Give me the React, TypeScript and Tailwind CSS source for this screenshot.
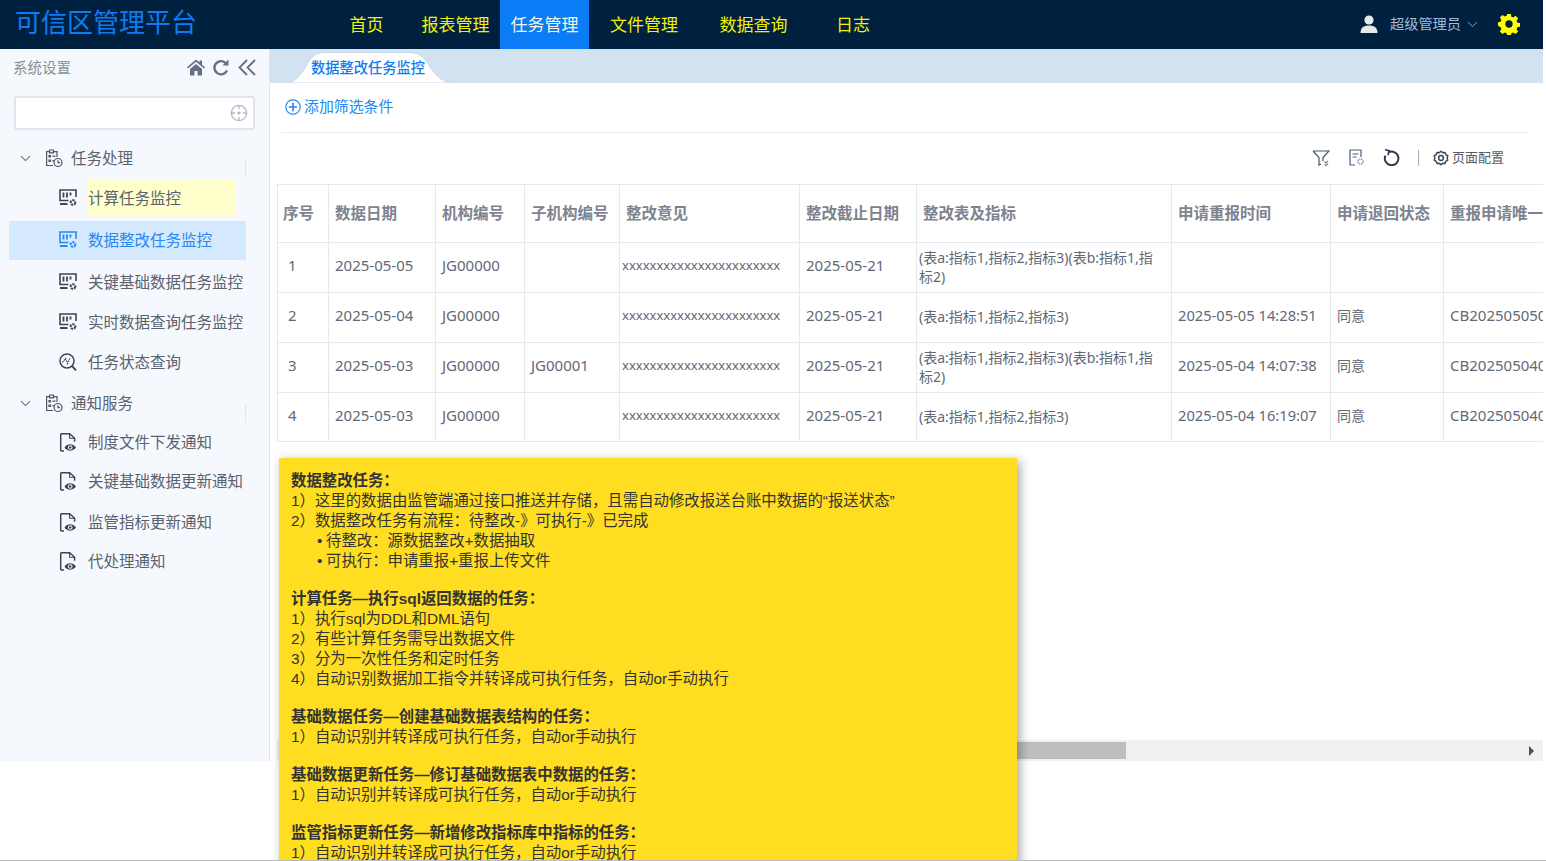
import { ChevronDown } from 'lucide-react'

const NAV = [
  { label: '首页', width: 'w-[89px]' },
  { label: '报表管理', width: 'w-[89px]' },
  { label: '任务管理', width: 'w-[89px]', active: true },
  { label: '文件管理', width: 'w-[110px]' },
  { label: '数据查询', width: 'w-[109px]' },
  { label: '日志', width: 'w-[90px]' },
]

const HEADERS = ['序号', '数据日期', '机构编号', '子机构编号', '整改意见', '整改截止日期', '整改表及指标', '申请重报时间', '申请退回状态', '重报申请唯一标识']

const XS = 'xxxxxxxxxxxxxxxxxxxxxxx'
const T2 = '(表a:指标1,指标2,指标3)(表b:指标1,指标2)'
const T1 = '(表a:指标1,指标2,指标3)'

const ROWS = [
  ['1', '2025-05-05', 'JG00000', '', XS, '2025-05-21', T2, '', '', ''],
  ['2', '2025-05-04', 'JG00000', '', XS, '2025-05-21', T1, '2025-05-05 14:28:51', '同意', 'CB20250505000001'],
  ['3', '2025-05-03', 'JG00000', 'JG00001', XS, '2025-05-21', T2, '2025-05-04 14:07:38', '同意', 'CB20250504000002'],
  ['4', '2025-05-03', 'JG00000', '', XS, '2025-05-21', T1, '2025-05-04 16:19:07', '同意', 'CB20250504000003'],
]

const NOTES = [
  {
    title: '数据整改任务：',
    lines: ['1）这里的数据由监管端通过接口推送并存储，且需自动修改报送台账中数据的“报送状态”', '2）数据整改任务有流程：待整改-》可执行-》已完成'],
    bullets: ['待整改：源数据整改+数据抽取', '可执行：申请重报+重报上传文件'],
  },
  {
    title: '计算任务—执行sql返回数据的任务：',
    lines: ['1）执行sql为DDL和DML语句', '2）有些计算任务需导出数据文件', '3）分为一次性任务和定时任务', '4）自动识别数据加工指令并转译成可执行任务，自动or手动执行'],
  },
  { title: '基础数据任务—创建基础数据表结构的任务：', lines: ['1）自动识别并转译成可执行任务，自动or手动执行'] },
  { title: '基础数据更新任务—修订基础数据表中数据的任务：', lines: ['1）自动识别并转译成可执行任务，自动or手动执行'] },
  { title: '监管指标更新任务—新增修改指标库中指标的任务：', lines: ['1）自动识别并转译成可执行任务，自动or手动执行'] },
]

function TaskIcon() {
  return (
    <svg width="18" height="19" viewBox="0 0 18 19" fill="none" stroke="currentColor" strokeWidth="1.2" className="shrink-0">
      <path d="M8 16.500H1.600V2.600h2.600M9 2.600h3v5.400" />
      <path d="M4.600 1h3.800v2.800H4.600z" />
      <path d="M4 6.500h1.500v1.500H4zM4 11h1.500v1.500H4zM7.500 7.200h3M7.500 11.700h1.500" />
      <circle cx="13" cy="13.500" r="4" />
      <path d="M13 11.200v2.500h2" />
    </svg>
  )
}

function MonitorIcon() {
  return (
    <svg width="18" height="18" viewBox="0 0 18 18" fill="none" stroke="currentColor" strokeWidth="1.6" className="shrink-0">
      <path d="M9.500 11.500H1V1h16v7" />
      <path d="M4.500 3.500v5M8 3.500v5M11.500 3.500v3M1 15h7.500" strokeWidth="1.8" />
      <circle cx="14" cy="13.500" r="2.300" strokeWidth="2" strokeDasharray="2.200 0.800" />
    </svg>
  )
}

function ScanIcon() {
  return (
    <svg width="18" height="18" viewBox="0 0 18 18" fill="none" stroke="currentColor" strokeWidth="1.5" className="shrink-0">
      <circle cx="8" cy="8" r="7" />
      <path d="M13 13l4 4.300" strokeWidth="1.900" />
      <path d="M3.500 9.500l3-4 2 5 2.500-5.500" strokeWidth="1.200" strokeDasharray="1.600 0.800" />
    </svg>
  )
}

function DocEyeIcon() {
  return (
    <svg width="18" height="19" viewBox="-1 0 18 19" fill="none" stroke="currentColor" strokeWidth="1.5" className="shrink-0">
      <path d="M4 18H1.600a.9.9 0 0 1-.9-.9V1.600A.9.9 0 0 1 1.600.7h8l5 4.600v3.500" />
      <path d="M9.500.7v4.600h5" strokeWidth="1" />
      <path d="M4.500 14.500c2.600-4.200 8.400-4.200 11.500 0-3.100 4.200-8.900 4.200-11.500 0z" fill="currentColor" stroke="none" />
      <circle cx="10.200" cy="14.500" r="2.300" fill="#f5f9fd" stroke="none" />
      <circle cx="10.200" cy="14.500" r="1.300" fill="currentColor" stroke="none" />
    </svg>
  )
}

const MENU = [
  { label: '任务处理', group: true, height: 'h-[38px]' },
  { label: '计算任务监控', icon: MonitorIcon, height: 'h-[42px]', mark: true },
  { label: '数据整改任务监控', icon: MonitorIcon, height: 'h-[42px]', active: true },
  { label: '关键基础数据任务监控', icon: MonitorIcon, height: 'h-[42px]' },
  { label: '实时数据查询任务监控', icon: MonitorIcon, height: 'h-[37px]' },
  { label: '任务状态查询', icon: ScanIcon, height: 'h-[44px]' },
  { label: '通知服务', group: true, height: 'h-[38px]' },
  { label: '制度文件下发通知', icon: DocEyeIcon, height: 'h-[40px]' },
  { label: '关键基础数据更新通知', icon: DocEyeIcon, height: 'h-[38px]' },
  { label: '监管指标更新通知', icon: DocEyeIcon, height: 'h-[44px]' },
  { label: '代处理通知', icon: DocEyeIcon, height: 'h-[34px]' },
]

function Sidebar() {
  return (
    <aside className="w-[270px] shrink-0 bg-[#f5f9fd] border-r border-[#e0e6ee] text-[15.5px] leading-[20px] text-[#5b616d]">
      <div className="h-[36px] flex items-center justify-between pl-[13px] pr-[13px]">
        <span className="text-[14.5px] text-[#8a8f99]">系统设置</span>
        <div className="flex items-center gap-[8px] text-[#666f82]">
          <svg width="18" height="17" viewBox="0 0 18 16" fill="currentColor">
            <path d="M9 0L0 7.800l1 1.200L9 2.200 17 9l1-1.200-3-2.600V1h-2.400v2.100zM3 9.600V16h4.400v-4.600h3.200V16H15V9.600L9 4.400z" />
          </svg>
          <svg width="17" height="17" viewBox="0 0 17 17" fill="none" stroke="currentColor" strokeWidth="2.400">
            <path d="M14 11.500a6.600 6.600 0 1 1-.6-6.600" />
            <path d="M15.500 0.500v6h-6z" fill="currentColor" stroke="none" />
          </svg>
          <svg width="18" height="17" viewBox="0 0 18 17" fill="none" stroke="currentColor" strokeWidth="1.800">
            <path d="M9 1L1.500 8.500 9 16M17 1L9.500 8.500 17 16" />
          </svg>
        </div>
      </div>
      <div className="px-[14px] pt-[11px]">
        <div className="h-[34px] w-[241px] bg-white border-2 border-[#dfe4ef] rounded-[3px] flex items-center justify-end pr-[5px]">
          <svg width="18" height="18" viewBox="0 0 18 18" fill="none" stroke="#b4b9c6" strokeWidth="1.400">
            <circle cx="9" cy="9" r="7.600" />
            <path d="M9 1v4M9 13v4M1 9h4M13 9h4" />
            <circle cx="9" cy="9" r="1.600" fill="#b4b9c6" stroke="none" />
          </svg>
        </div>
      </div>
      <nav className="mt-[9px]">
        {MENU.map((item) => {
          const Icon = item.icon
          if (item.group) {
            return (
              <div key={item.label} className={`${item.height} relative flex items-center pl-[17px]`}>
                <ChevronDown size={17} strokeWidth={1.5} className="text-[#6b7383]" />
                <span className="ml-[11px] text-[#4f5562]">
                  <TaskIcon />
                </span>
                <span className="ml-[8px]">{item.label}</span>
                <span className="absolute left-[245px] top-[20px] h-[18px] w-px bg-[#dfe6ee]" />
              </div>
            )
          }
          return (
            <div key={item.label} className={`${item.height} relative flex items-center`}>
              <div
                className={`flex items-center ml-[9px] w-[237px] pl-[50px] h-[39px] ${
                  item.active ? 'bg-[#d4e8fe] text-[#2b87f0]' : ''
                }`}
              >
                <span className={item.active ? 'text-[#2b87f0]' : 'text-[#3f4653]'}>{Icon && <Icon />}</span>
                <span
                  className={`ml-[11px] ${item.mark ? 'bg-[#ffffcc] w-[148px] h-[36px] flex items-center' : ''}`}
                >
                  {item.label}
                </span>
              </div>
            </div>
          )
        })}
      </nav>
    </aside>
  )
}

function Toolbar() {
  return (
    <div className="h-[51px] pb-[2px] flex items-center justify-end pr-[39px] text-[#4a5568]">
      <svg width="18" height="16" viewBox="0 0 18 16" fill="none" stroke="#46536b" strokeWidth="1.2">
        <path d="M1 1h16l-6 6.500V11M1 1l6 6.500V15l2-1" />
        <path d="M12.500 11.500l1.600 1.600 2-2.200M12.500 14.500l1.600 1 2-1.600" stroke="#7a8494" />
      </svg>
      <svg width="16" height="17" viewBox="0 0 16 17" fill="none" stroke="#48607f" strokeWidth="1.2" className="ml-[19px]">
        <path d="M6 16H1V1h11v7" />
        <path d="M3.500 5h6M3.500 8h4" />
        <circle cx="11.500" cy="12.500" r="2.600" strokeDasharray="1.400 .7" strokeWidth="1.4" stroke="#8b95a5" />
      </svg>
      <svg width="17" height="17" viewBox="0 0 17 17" fill="none" stroke="#2b3a52" strokeWidth="2" className="ml-[18px]">
        <path d="M5 3.600a6.800 6.800 0 1 1-2.600 3" />
        <path d="M2 .6l4.200 1.200-1.200 4.400" strokeWidth="1.6" />
      </svg>
      <span className="ml-[18px] h-[16px] w-px bg-[#a8b0bf]" />
      <svg width="16" height="16" viewBox="0 0 24 24" fill="none" stroke="#3c4657" strokeWidth="2.2" className="ml-[14px]">
        <path d="M12 1.800l2.600 2.200 3.400-.4 1.200 3.200 3 1.800-1 3.300 1 3.300-3 1.800-1.200 3.200-3.400-.4-2.600 2.200-2.600-2.200-3.400.4-1.200-3.200-3-1.800 1-3.300-1-3.300 3-1.800L6 3.600l3.400.4z" strokeLinejoin="round" />
        <circle cx="12" cy="12" r="3.600" />
      </svg>
      <span className="ml-[3px] text-[13px] text-[#555b66]">页面配置</span>
    </div>
  )
}

function DataTable() {
  return (
    <div className="ml-[7px] overflow-hidden">
      <table className="table-fixed border-collapse w-[1366px] text-[14px] text-[#626875]">
        <colgroup>
          <col className="w-[51px]" />
          <col className="w-[107px]" />
          <col className="w-[89px]" />
          <col className="w-[95px]" />
          <col className="w-[180px]" />
          <col className="w-[117px]" />
          <col className="w-[255px]" />
          <col className="w-[159px]" />
          <col className="w-[113px]" />
          <col className="w-[200px]" />
        </colgroup>
        <thead>
          <tr className="h-[58px]">
            {HEADERS.map((h, i) => (
              <th
                key={h}
                className={`border border-[#e7e8ec] text-left text-[15.5px] font-semibold text-[#7d838f] whitespace-nowrap overflow-hidden ${
                  i === 0 ? 'pl-[5px]' : 'px-[6px]'
                }`}
              >
                {h}
              </th>
            ))}
          </tr>
        </thead>
        <tbody>
          {ROWS.map((row, r) => (
            <tr key={row[0]} className={r === 3 ? 'h-[49px]' : 'h-[50px]'}>
              {row.map((cell, i) => {
                if (i === 4) {
                  return (
                    <td key={i} className="border border-[#e7e8ec] px-[2px] pb-[4px] text-[13px] leading-[19px]">
                      {cell}
                    </td>
                  )
                }
                if (i === 6) {
                  return (
                    <td key={i} className="border border-[#e7e8ec] pl-[2px] pr-[12px] pb-[2px] text-[14px] leading-[19px]">
                      {cell}
                    </td>
                  )
                }
                return (
                  <td
                    key={i}
                    className={`border border-[#e7e8ec] whitespace-nowrap overflow-hidden pb-[4px] ${
                      i === 0 ? 'pl-[10px]' : 'px-[6px]'
                    } ${i === 8 ? 'text-[14px]' : i === 7 ? 'text-[14.7px]' : 'text-[15px]'}`}
                  >
                    {cell}
                  </td>
                )
              })}
            </tr>
          ))}
        </tbody>
      </table>
    </div>
  )
}

function NoteCard() {
  return (
    <div
      className="absolute left-[279px] top-[458px] w-[738px] h-[420px] bg-[#ffde21] pl-[12px] pt-[13px] text-[15.4px] leading-[20px] text-[#333333] shadow-[3px_3px_10px_rgba(0,0,0,0.35)]"
      style={{ fontFamily: '"Liberation Sans", "Noto Sans CJK SC", sans-serif' }}
    >
      {NOTES.map((note) => (
        <div key={note.title} className="mb-[18px]">
          <div className="font-bold">{note.title}</div>
          {note.lines.map((line) => (
            <div key={line}>{line}</div>
          ))}
          {note.bullets?.map((line) => (
            <div key={line} className="flex pl-[26px]">
              <span className="w-[9px]">•</span>
              {line}
            </div>
          ))}
        </div>
      ))}
    </div>
  )
}

export default function App() {
  return (
    <div
      className="relative h-[861px] overflow-hidden bg-white border-b border-[#bbbbbb]"
      style={{ fontFamily: '"Noto Sans", "Noto Sans CJK SC", sans-serif' }}
    >
      <div className="w-[1543px]">
        <header className="h-[49px] bg-[#002040] flex items-center">
          <div className="w-[322px] pl-[15px] pb-[5px] text-[26px] leading-[44px] text-[#0d7cf2]">可信区管理平台</div>
          <nav className="flex h-full">
            {NAV.map((n) => (
              <div
                key={n.label}
                className={`${n.width} flex items-center justify-center text-[17px] ${
                  n.active ? 'bg-[#0a7cf5] text-[#f4f6e8]' : 'text-[#f2f200]'
                }`}
              >
                {n.label}
              </div>
            ))}
          </nav>
          <div className="ml-auto flex items-center pr-[23px]">
            <svg width="18" height="18" viewBox="0 0 18 18" fill="#e6e8ea">
              <circle cx="9" cy="5" r="4.600" />
              <path d="M0.500 18c0-5 3-7.400 8.500-7.400s8.500 2.400 8.500 7.400z" />
            </svg>
            <span className="ml-[12px] pb-[2px] text-[14.2px] text-[#a3bad8]">超级管理员</span>
            <ChevronDown size={17} strokeWidth={1.2} className="ml-[3px] text-[#a3bad8]" />
            <svg width="22" height="22" viewBox="0 0 24 24" fill="#ffff00" className="ml-[17px]">
              <path
                fillRule="evenodd"
                d="M10 1h4l.6 3 2 .8 2.600-1.700 2.800 2.800-1.700 2.600.8 2 2.900.5v4l-2.900.6-.8 2 1.700 2.600-2.800 2.800-2.600-1.700-2 .8-.6 2.900h-4l-.6-2.900-2-.8-2.600 1.700-2.800-2.800 1.700-2.600-.8-2L0 14v-4l2.900-.5.8-2L2 4.900l2.800-2.800 2.600 1.700 2-.8zM12 8a4 4 0 1 0 0 8 4 4 0 0 0 0-8z"
              />
            </svg>
          </div>
        </header>

        <div className="flex h-[712px]">
          <Sidebar />
          <main className="flex-1 min-w-0 flex flex-col">
            <div className="h-[34px] shrink-0 bg-[#d3e2f1] pl-[17px]">
              <div className="relative w-[165px] h-[34px]">
                <svg width="165" height="34" viewBox="0 0 165 34" className="absolute inset-0">
                  <path
                    d="M0 34C12 32 17 20 22 12C26 6 31 3.500 38 3.500H122C130 3.500 135 6 140 13C146 23 152 32 165 34Z"
                    fill="#ffffff"
                    stroke="#c9d7e6"
                    strokeWidth="1"
                  />
                </svg>
                <span className="absolute left-[24px] top-[9px] text-[14.25px] font-medium leading-[20px] text-[#0d7cf2] whitespace-nowrap">
                  数据整改任务监控
                </span>
              </div>
            </div>
            <div className="ml-[11px] mr-[15px] h-[50px] pb-[2px] shrink-0 border-b border-[#e8ecf3] flex items-center pl-[4px] text-[14.9px] text-[#2088f0]">
              <svg width="16" height="16" viewBox="0 0 16 16" fill="none" stroke="#2088f0" strokeWidth="1.2">
                <circle cx="8" cy="8" r="7.200" />
                <path d="M8 3.800v8.400M3.800 8h8.400" strokeWidth="1.6" />
              </svg>
              <span className="ml-[3px]">添加筛选条件</span>
            </div>
            <Toolbar />
            <DataTable />
            <div className="mt-auto ml-[7px] h-[21px] bg-[#f0f0f0] flex items-center justify-between">
              <span className="ml-[20px] w-[829px] h-[17px] bg-[#bebebe]" />
              <span className="mr-[9px] border-y-[5px] border-y-transparent border-l-[5px] border-l-[#505050]" />
            </div>
          </main>
        </div>
      </div>
      <NoteCard />
    </div>
  )
}
